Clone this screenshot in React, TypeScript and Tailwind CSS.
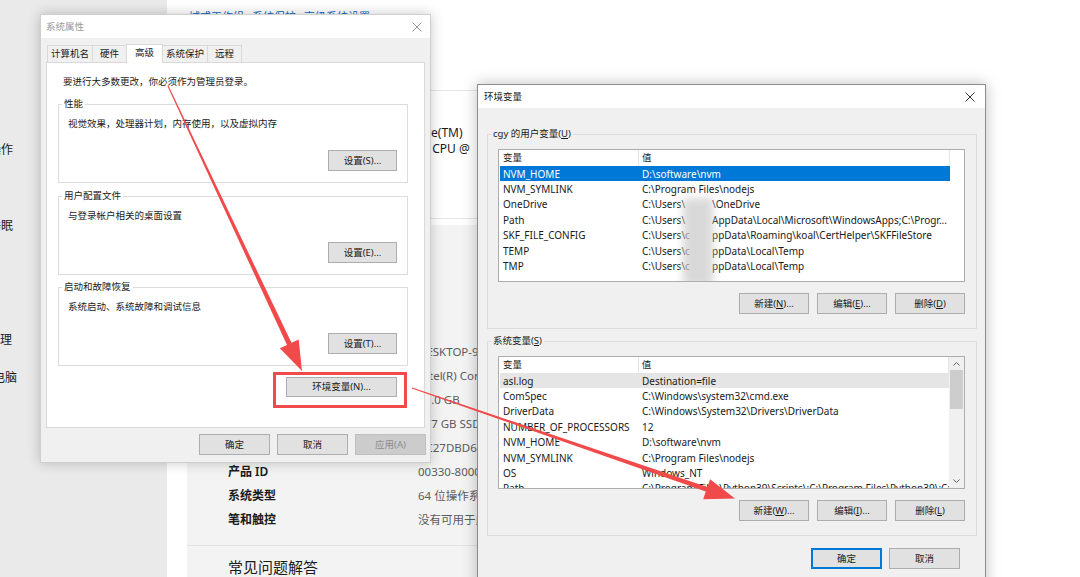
import React from "react"

type Row = [string, React.ReactNode]

// sidebar items sit under the dialog, only their last glyphs peek out
const nav: [string, string][] = [
  ["显示", "-ml-[50px]"],
  ["声音", "-ml-[50px]"],
  ["通知和操作", "-ml-[47px]"],
  ["专注助手", "-ml-[50px]"],
  ["电源和睡眠", "-ml-[47px]"],
  ["存储", "-ml-[50px]"],
  ["平板电脑", "-ml-[50px]"],
  ["多任务处理", "-ml-[48px]"],
  ["投影到此电脑", "-ml-[55px]"],
]

const specs: [string, string][] = [
  ["设备名称", "DESKTOP-9C5J3KL"],
  ["处理器", "Intel(R) Core(TM) i7-10750H CPU @ 2.60GHz   2.59 GHz"],
  ["机带 RAM", "16.0 GB"],
  ["存储", "477 GB SSD"],
  ["设备 ID", "BC27DBD6-4E5A-4C2B-9F1D-6A8E2C3B7D10"],
  ["产品 ID", "00330-80000-00000-AA475"],
  ["系统类型", "64 位操作系统, 基于 x64 的处理器"],
  ["笔和触控", "没有可用于此显示器的笔或触控输入"],
]

function Masked({ pre, post }: { pre: string; post: string }) {
  return (
    <>
      <span className="inline-block w-[70px]">{pre}</span>
      {post}
    </>
  )
}

const userVars: Row[] = [
  ["NVM_HOME", "D:\\software\\nvm"],
  ["NVM_SYMLINK", "C:\\Program Files\\nodejs"],
  ["OneDrive", <Masked pre="C:\Users\" post="\OneDrive" />],
  ["Path", <Masked pre="C:\Users\" post="AppData\Local\Microsoft\WindowsApps;C:\Progr..." />],
  ["SKF_FILE_CONFIG", <Masked pre="C:\Users\c" post="ppData\Roaming\koal\CertHelper\SKFFileStore" />],
  ["TEMP", <Masked pre="C:\Users\c" post="ppData\Local\Temp" />],
  ["TMP", <Masked pre="C:\Users\c" post="ppData\Local\Temp" />],
]

const sysVars: Row[] = [
  ["asl.log", "Destination=file"],
  ["ComSpec", "C:\\Windows\\system32\\cmd.exe"],
  ["DriverData", "C:\\Windows\\System32\\Drivers\\DriverData"],
  ["NUMBER_OF_PROCESSORS", "12"],
  ["NVM_HOME", "D:\\software\\nvm"],
  ["NVM_SYMLINK", "C:\\Program Files\\nodejs"],
  ["OS", "Windows_NT"],
  ["Path", "C:\\Program Files\\Python39\\Scripts\\;C:\\Program Files\\Python39\\;C:\\Windows\\system32"],
]

function CloseX({ className }: { className: string }) {
  return (
    <svg width="10" height="10" viewBox="0 0 10 10" className={className}>
      <path d="M0.5 0.5L9.5 9.5M9.5 0.5L0.5 9.5" stroke="currentColor" strokeWidth="1" />
    </svg>
  )
}

function Btn({
  children,
  w = "w-[70px]",
  h = "h-[21px]",
  disabled,
  primary,
}: {
  children: React.ReactNode
  w?: string
  h?: string
  disabled?: boolean
  primary?: boolean
}) {
  let look = "bg-[#e1e1e1] border-[#adadad] text-[#1a1a1a]"
  if (disabled) look = "bg-[#cccccc] border-[#bfbfbf] text-[#8d8d8d]"
  if (primary) look = "bg-[#e1e1e1] border-[#0078d7] text-[#1a1a1a] shadow-[inset_0_0_0_1px_#0078d7]"
  return <div className={`${w} ${h} ${look} border flex items-center justify-center shrink-0`}>{children}</div>
}

function Group({
  label,
  labelBg,
  className,
  children,
}: {
  label: React.ReactNode
  labelBg: string
  className: string
  children: React.ReactNode
}) {
  return (
    <div className={`border border-[#dcdcdc] ${className}`}>
      <div className={`-mt-[8px] ml-[3px] px-[2px] w-fit leading-[14px] ${labelBg}`}>{label}</div>
      {children}
    </div>
  )
}

function ListView({ rows, selected, hover, scroll, masked }: { rows: Row[]; selected?: number; hover?: number; scroll?: boolean; masked?: boolean }) {
  return (
    <div className="relative w-[467px] h-[133px] border border-[#adadad] bg-white flex overflow-hidden">
      <div className="flex-1 min-w-0 overflow-hidden">
        <div className="flex h-[16px] items-center ml-[1px]">
          <div className="w-[139px] h-full pl-[3px] flex items-center border-r border-[#e5e5e5]">变量</div>
          <div className="w-[311px] h-full pl-[3px] flex items-center border-r border-[#e5e5e5]">值</div>
        </div>
        {rows.map(([k, v], i) => {
          let tone = ""
          if (i === selected) tone = "bg-[#0078d7] text-white"
          else if (i === hover) tone = "bg-[#e5e5e5]"
          return (
            <div key={k + i} className={`ml-[1px] w-[450px] h-[15.4px] flex items-center text-[10px] whitespace-nowrap ${tone}`}>
              <div className="w-[139px] pl-[3px] overflow-hidden">{k}</div>
              <div className="flex-1 pl-[3px] overflow-hidden">{v}</div>
            </div>
          )
        })}
      </div>
      {scroll && (
        <div className="w-[15px] shrink-0 bg-[#f0f0f0] flex flex-col">
          <div className="h-[13px] flex items-center justify-center">
            <svg width="7" height="4" viewBox="0 0 7 4">
              <path d="M0.5 3.5L3.5 0.5L6.5 3.5" fill="none" stroke="#606060" strokeWidth="1" />
            </svg>
          </div>
          <div className="h-[39px] mx-[1px] bg-[#cdcdcd]" />
          <div className="flex-1" />
          <div className="h-[14px] flex items-center justify-center">
            <svg width="7" height="4" viewBox="0 0 7 4">
              <path d="M0.5 0.5L3.5 3.5L6.5 0.5" fill="none" stroke="#606060" strokeWidth="1" />
            </svg>
          </div>
        </div>
      )}
      {masked && (
        <div className="absolute left-[184px] top-[48px] w-[30px] h-[88px] bg-[#cfcfcf] opacity-80 blur-[4px]" />
      )}
    </div>
  )
}

function SettingsPage() {
  return (
    <div className="flex h-full">
      <div className="w-[167px] shrink-0 bg-[#eaeaea] pt-[55px] overflow-hidden">
        {nav.map(([n, ml]) => (
          <div key={n} className={`h-[38px] flex items-center whitespace-nowrap text-[12px] ${ml}`}>
            {n}
          </div>
        ))}
      </div>
      <div className="flex-1 flex flex-col">
        <div className="mt-[10px] ml-[22px] flex gap-[8px] text-[11px] leading-[14px] text-[#0a64c2]">
          <span>域或工作组</span>
          <span>系统保护</span>
          <span>高级系统设置</span>
        </div>
        <div className="mt-[66px] ml-[20px] w-[760px] h-[129px] border border-[#e5e5e5] pt-[34px] pl-[180px] text-[12px] leading-[16px] whitespace-nowrap">
          <p>Intel(R) Core(TM)</p>
          <p className="ml-[4px]">i7-10750H CPU @</p>
        </div>
        <div className="mt-[6px] ml-[20px] w-[760px] flex-1 bg-[#f3f3f3]">
          <div className="h-[115px] pl-[41px] pt-[22px] text-[14px] font-semibold">设备规格</div>
          <div className="pl-[41px]">
            {specs.map(([k, v]) => (
              <div key={k} className="h-[24px] flex items-center whitespace-nowrap">
                <span className="w-[190px] shrink-0 text-[12px] font-semibold">{k}</span>
                <span className="text-[11.5px] text-[#5c5c5c]">{v}</span>
              </div>
            ))}
          </div>
          <div className="mt-[13px] h-px bg-[#e2e2e2]" />
          <div className="mt-[11px] pl-[41px] text-[15px] leading-[20px]">常见问题解答</div>
        </div>
      </div>
    </div>
  )
}

const tabs: [string, string][] = [
  ["计算机名", "w-[46px]"],
  ["硬件", "w-[35px]"],
  ["高级", "w-[37px]"],
  ["系统保护", "w-[46px]"],
  ["远程", "w-[35px]"],
]

function SystemProperties() {
  return (
    <div className="absolute left-[40px] top-[14px] w-[391px] h-[449px] flex flex-col border border-[#cfcfcf] bg-[#f0f0f0] shadow-[0_0_12px_rgba(0,0,0,0.22)] text-[9.5px] leading-[14px]">
      <div className="h-[23px] shrink-0 bg-white flex items-center justify-between pl-[5px] pr-[8px] text-[#9a9a9a]">
        <span>系统属性</span>
        <CloseX className="text-[#9a9a9a]" />
      </div>
      <div className="px-[5px]">
        <div className="mt-[6px] ml-[1px] flex items-end h-[18px] relative z-10">
          {tabs.map(([t, w], i) =>
            i === 2 ? (
              <div key={t} className={`${w} h-[19px] -mb-px -ml-px bg-white border border-b-0 border-[#d9d9d9] flex justify-center pt-[1px]`}>
                {t}
              </div>
            ) : (
              <div key={t} className={`${w} h-[17px] ${i === 0 ? "" : "-ml-px"} bg-[#f0f0f0] border border-b-0 border-[#d9d9d9] flex items-center justify-center`}>
                {t}
              </div>
            )
          )}
        </div>
        <div className="h-[366px] bg-white border border-[#d9d9d9] flex flex-col pt-[12px]">
          <p className="ml-[16px]">要进行大多数更改，你必须作为管理员登录。</p>
          <Group label="性能" labelBg="bg-white" className="mt-[15px] ml-[11px] w-[350px] h-[79px]">
            <p className="mt-[6px] ml-[9px]">视觉效果，处理器计划，内存使用，以及虚拟内存</p>
            <div className="mt-[19px] mr-[10px] flex justify-end">
              <Btn w="w-[69px]">设置(S)...</Btn>
            </div>
          </Group>
          <Group label="用户配置文件" labelBg="bg-white" className="mt-[13px] ml-[11px] w-[350px] h-[79px]">
            <p className="mt-[6px] ml-[9px]">与登录帐户相关的桌面设置</p>
            <div className="mt-[19px] mr-[10px] flex justify-end">
              <Btn w="w-[69px]">设置(E)...</Btn>
            </div>
          </Group>
          <Group label="启动和故障恢复" labelBg="bg-white" className="mt-[12px] ml-[11px] w-[350px] h-[79px]">
            <p className="mt-[6px] ml-[9px]">系统启动、系统故障和调试信息</p>
            <div className="mt-[19px] mr-[10px] flex justify-end">
              <Btn w="w-[69px]">设置(T)...</Btn>
            </div>
          </Group>
          <div className="mt-[11px] mr-[27px] flex justify-end">
            <Btn w="w-[111px]" h="h-[20px]">环境变量(N)...</Btn>
          </div>
        </div>
        <div className="mt-[6px] -mr-px flex justify-end gap-[7px]">
          <Btn w="w-[71px]">确定</Btn>
          <Btn w="w-[71px]">取消</Btn>
          <Btn w="w-[71px]" disabled>应用(A)</Btn>
        </div>
      </div>
    </div>
  )
}

function EnvVars() {
  return (
    <div className="absolute left-[477px] top-[84px] w-[509px] h-[510px] flex flex-col border border-[#8c8c8c] bg-[#f0f0f0] shadow-[0_0_14px_rgba(0,0,0,0.25)] text-[9.5px] leading-[14px]">
      <div className="h-[23px] shrink-0 bg-white flex items-center justify-between pl-[6px] pr-[10px]">
        <span>环境变量</span>
        <CloseX className="text-[#333333]" />
      </div>
      <div className="pl-[9px]">
        <Group
          label={<>cgy 的用户变量(<span className="underline">U</span>)</>}
          labelBg="bg-[#f0f0f0]"
          className="mt-[26px] w-[490px] h-[195px]"
        >
          <div className="mt-[8px] ml-[10px]">
            <ListView rows={userVars} selected={0} masked />
          </div>
          <div className="mt-[11px] mr-[11px] flex justify-end gap-[8px]">
            <Btn>新建(<span className="underline">N</span>)...</Btn>
            <Btn>编辑(<span className="underline">E</span>)...</Btn>
            <Btn>删除(<span className="underline">D</span>)</Btn>
          </div>
        </Group>
        <Group
          label={<>系统变量(<span className="underline">S</span>)</>}
          labelBg="bg-[#f0f0f0]"
          className="mt-[12px] w-[490px] h-[195px]"
        >
          <div className="mt-[8px] ml-[10px]">
            <ListView rows={sysVars} hover={0} scroll />
          </div>
          <div className="mt-[11px] mr-[11px] flex justify-end gap-[8px]">
            <Btn>新建(<span className="underline">W</span>)...</Btn>
            <Btn>编辑(<span className="underline">I</span>)...</Btn>
            <Btn>删除(<span className="underline">L</span>)</Btn>
          </div>
        </Group>
        <div className="mt-[12px] mr-[25px] flex justify-end gap-[7px]">
          <Btn w="w-[71px]" primary>确定</Btn>
          <Btn w="w-[71px]">取消</Btn>
        </div>
      </div>
    </div>
  )
}

function Annotations() {
  return (
    <svg className="absolute inset-0 pointer-events-none" width="1080" height="577" viewBox="0 0 1080 577">
      <polygon
        fill="#f04a4a"
        points="167.5,86.2 287,344.9 279.8,348.3 302,371 298.7,339.4 291.5,342.8 168.5,85.8"
      />
      <polygon
        fill="#f04a4a"
        points="411.8,388.5 705.8,491.6 703.2,499.2 735,498.5 710.1,479.3 707.4,486.9 412.2,387.5"
      />
      <rect x="274.5" y="373.5" width="131" height="33" fill="none" stroke="#f04a4a" strokeWidth="3" />
    </svg>
  )
}

export default function App() {
  return (
    <div className="relative w-[1080px] h-[577px] overflow-hidden bg-white font-['Noto_Sans','Noto_Sans_CJK_SC',sans-serif] text-[#1a1a1a]">
      <SettingsPage />
      <SystemProperties />
      <EnvVars />
      <Annotations />
    </div>
  )
}
